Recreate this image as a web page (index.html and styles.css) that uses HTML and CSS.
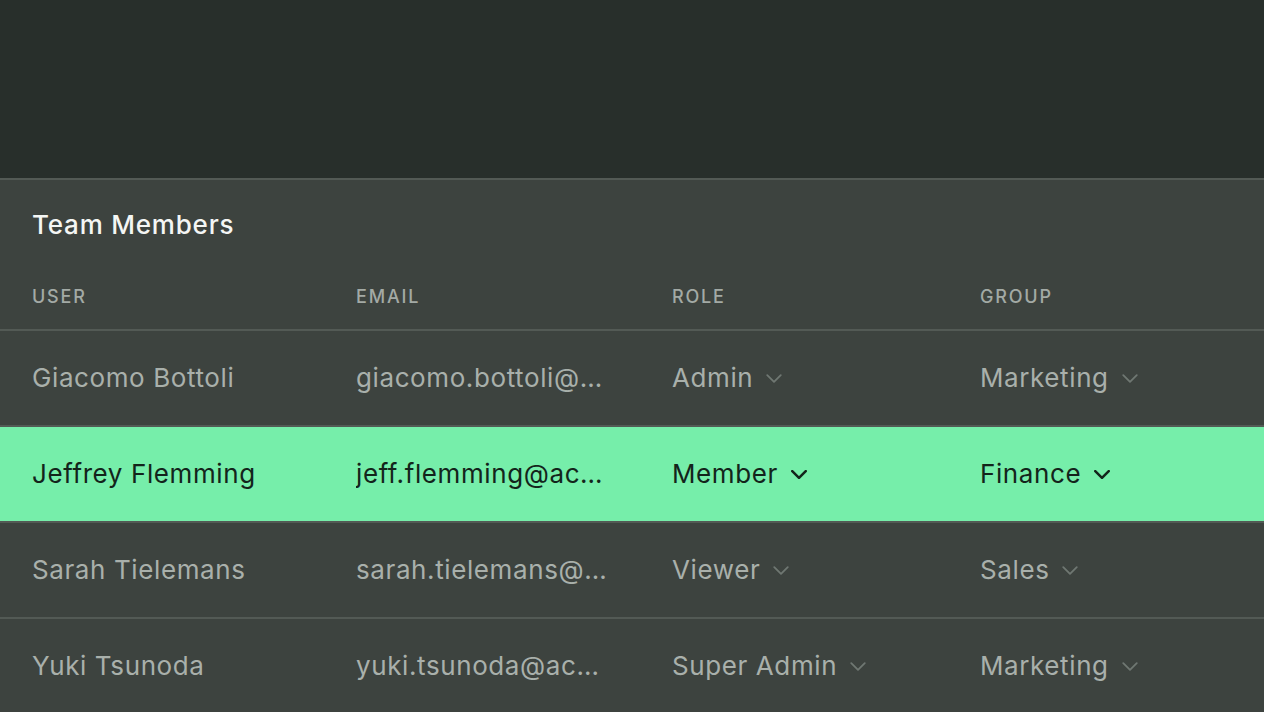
FILE: index.html
```html
<!DOCTYPE html>
<html>
<head>
<meta charset="utf-8">
<link rel="stylesheet" href="styles.css">
</head>
<body>
<div class="top"></div>
<section class="panel">
  <h1 class="title">Team Members</h1>
  <div class="table">
    <div class="row head">
      <div class="cell">USER</div>
      <div class="cell">EMAIL</div>
      <div class="cell">ROLE</div>
      <div class="cell">GROUP</div>
    </div>
    <div class="row">
      <div class="cell">Giacomo Bottoli</div>
      <div class="cell"><span class="email">giacomo.bottoli@acme.com</span></div>
      <div class="cell"><span class="sel">Admin<svg class="chev" viewBox="0 0 14 8"><path d="M1 1l6 6 6-6"/></svg></span></div>
      <div class="cell"><span class="sel">Marketing<svg class="chev" viewBox="0 0 14 8"><path d="M1 1l6 6 6-6"/></svg></span></div>
    </div>
    <div class="row active">
      <div class="cell">Jeffrey Flemming</div>
      <div class="cell"><span class="email">jeff.flemming@acme.com</span></div>
      <div class="cell"><span class="sel">Member<svg class="chev" viewBox="0 0 14 8"><path d="M1 1l6 6 6-6"/></svg></span></div>
      <div class="cell"><span class="sel">Finance<svg class="chev" viewBox="0 0 14 8"><path d="M1 1l6 6 6-6"/></svg></span></div>
    </div>
    <div class="row">
      <div class="cell">Sarah Tielemans</div>
      <div class="cell"><span class="email">sarah.tielemans@acme.com</span></div>
      <div class="cell"><span class="sel">Viewer<svg class="chev" viewBox="0 0 14 8"><path d="M1 1l6 6 6-6"/></svg></span></div>
      <div class="cell"><span class="sel">Sales<svg class="chev" viewBox="0 0 14 8"><path d="M1 1l6 6 6-6"/></svg></span></div>
    </div>
    <div class="row">
      <div class="cell">Yuki Tsunoda</div>
      <div class="cell"><span class="email">yuki.tsunoda@acme.com</span></div>
      <div class="cell"><span class="sel">Super Admin<svg class="chev" viewBox="0 0 14 8"><path d="M1 1l6 6 6-6"/></svg></span></div>
      <div class="cell"><span class="sel">Marketing<svg class="chev" viewBox="0 0 14 8"><path d="M1 1l6 6 6-6"/></svg></span></div>
    </div>
  </div>
</section>
</body>
</html>
```
FILE: styles.css
```css
html, body {
  margin: 0;
  padding: 0;
  height: 712px;
  overflow: hidden;
  background: #3d433f;
  font-family: Inter, "DejaVu Sans", sans-serif;
}
.top {
  height: 178px;
  background: #282f2b;
  border-bottom: 2px solid #535a55;
}
.panel {
  background: #3d433f;
}
.title {
  margin: 0;
  padding: 28px 32px 0;
  height: 57px;
  box-sizing: border-box;
  font-size: 26px;
  font-weight: 500;
  color: #f4f6f4;
  line-height: 34px;
  letter-spacing: 0.8px;
}
.row {
  display: grid;
  grid-template-columns: 324px 316px 308px 1fr;
  padding: 0 32px;
  align-items: center;
  height: 94px;
  border-top: 2px solid #535a55;
  font-size: 26px;
  letter-spacing: 0.6px;
  color: #a9b0ab;
  line-height: 30px;
}
.row.head {
  height: 92px;
  border-top: none;
  font-size: 18px;
  font-weight: 500;
  letter-spacing: 1.8px;
  color: #a3aaa5;
  align-items: end;
  padding-bottom: 21px;
  box-sizing: border-box;
  line-height: 22px;
}
.row.active {
  background: #76eeaa;
  color: #13241b;
}
.cell {
  white-space: nowrap;
  min-width: 0;
}
.email {
  display: block;
  max-width: 254px;
  overflow: hidden;
  text-overflow: ellipsis;
}
.sel {
  display: inline-flex;
  align-items: center;
}
.chev {
  width: 16px;
  height: 9px;
  margin-left: 13px;
  fill: none;
  stroke: #6f7772;
  stroke-width: 1.6;
  stroke-linecap: round;
  stroke-linejoin: round;
}
.active .chev {
  stroke: #13241b;
  stroke-width: 2.2;
}
```
